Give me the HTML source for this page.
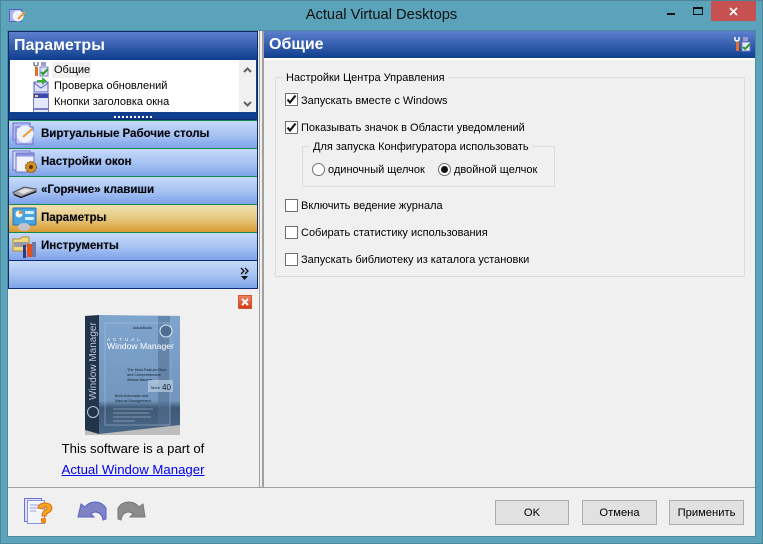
<!DOCTYPE html>
<html><head><meta charset="utf-8">
<style>
*{box-sizing:border-box;margin:0;padding:0}
html,body{width:763px;height:544px;overflow:hidden;background:#5ba3ba}
body{position:relative;font-family:"Liberation Sans","DejaVu Sans",sans-serif;font-size:11px;color:#000}
.a{position:absolute}
.t{position:absolute;white-space:nowrap;line-height:14px;font-size:11px}
.nav{position:absolute;left:9px;width:248px;height:28px;background:linear-gradient(#c6dafa,#a8c4f3 50%,#7ea2ea);border-top:1px solid #0f8a4a}
.nav b{position:absolute;left:32px;top:6px;font-size:11.5px;line-height:14px;white-space:nowrap;color:#000;text-shadow:1px 0 0 #1b2f6b33}
.nav svg{position:absolute;left:3px;top:1px}
.cb{position:absolute;left:285px;width:13px;height:13px;border:1px solid #707070;background:#fff}
.cb svg{position:absolute;left:0;top:0}
.btn{position:absolute;top:500px;height:25px;border:1px solid #adadad;background:#e1e1e1;text-align:center;font-size:11.2px;line-height:24px}
.rad{position:absolute;top:163px;width:13px;height:13px;border:1px solid #707070;border-radius:50%;background:#fff}
</style></head><body>
<div class="a" style="left:0;top:0;width:763px;height:544px;border:1px solid #4c8799"></div>
<svg class="a" style="left:9px;top:9px" width="18" height="14" viewBox="0 0 18 14"><rect x="0.5" y="0.5" width="12" height="12" fill="#aab0ea" stroke="#5a5fc0"/><circle cx="9" cy="7" r="5.5" fill="#f1f3fb"/><path d="M9 10L16 3" stroke="#ee9a30" stroke-width="2"/></svg>
<div class="a" style="left:0;top:6px;width:763px;text-align:center;font-size:14.700px;line-height:19px;color:#111">Actual Virtual Desktops</div>
<div class="a" style="left:667px;top:13px;width:8px;height:2px;background:#111"></div>
<div class="a" style="left:693px;top:7px;width:10px;height:8px;border:1px solid #111;border-top-width:2px"></div>
<div class="a" style="left:711px;top:1px;width:45px;height:20px;background:#c75050"></div>
<svg class="a" style="left:729px;top:7px" width="9" height="9" viewBox="0 0 9 9"><path d="M1 1L8 8M8 1L1 8" stroke="#fff" stroke-width="1.7"/></svg>

<div class="a" style="left:7px;top:30px;width:749px;height:507px;background:#f0f0f0;border:1px solid #4c8a9e"></div>

<!-- left header -->
<div class="a" style="left:8px;top:31px;width:250px;height:89px;background:linear-gradient(#5d80cf,#0f3f8e 27px,#0f3f8e);border:1px solid #0e2a66"></div>
<div class="a" style="left:14px;top:37px;font-size:16px;font-weight:bold;line-height:18px;color:#fff">Параметры</div>
<div class="a" style="left:10px;top:60px;width:246px;height:52px;background:#fff;overflow:hidden">
  <svg class="a" style="left:23px;top:1px" width="17" height="16" viewBox="0 0 17 16"><path d="M1 1v3q2 2 4 0V1" fill="none" stroke="#7b7f9d" stroke-width="1.5"/><rect x="2" y="6" width="3" height="9" fill="#e0702a"/><rect x="7" y="6" width="8" height="9" fill="#dfe2f7" stroke="#7a7ec9"/><path d="M8 11l2 2 5-5" stroke="#2a9a2a" stroke-width="2" fill="none"/><rect x="8" y="1" width="5" height="4" fill="#9a9ed0"/></svg>
  <svg class="a" style="left:23px;top:17px" width="17" height="16" viewBox="0 0 17 16"><rect x="1" y="5" width="14" height="10" fill="#dfe2fa" stroke="#5a5fc0"/><path d="M1 6l7 5 7-5" fill="none" stroke="#5a5fc0"/><path d="M4 3h5V0l5 4-5 4V5H4z" fill="#3eaa3a"/></svg>
  <svg class="a" style="left:23px;top:33px" width="17" height="16" viewBox="0 0 17 16"><rect x="0.5" y="0.5" width="15" height="15" fill="#e4e8fb" stroke="#7a7ec9"/><rect x="1" y="1" width="14" height="4" fill="#3c49a8"/><rect x="2" y="2" width="3" height="2" fill="#f0d060"/></svg>
  <svg class="a" style="left:23px;top:49px" width="17" height="4"><rect x="0.5" y="0.5" width="15" height="4" fill="#e4e8fb" stroke="#7a7ec9"/></svg>
  <div class="a" style="left:42px;top:2px;width:39px;height:16px;background:#f0f0f0"></div>
  <div class="t" style="left:44px;top:3px">Общие</div>
  <div class="t" style="left:44px;top:19px">Проверка обновлений</div>
  <div class="t" style="left:44px;top:35px">Кнопки заголовка окна</div>
  <div class="a" style="left:229px;top:0;width:17px;height:52px;background:#f0f0f0"></div>
  <svg class="a" style="left:233px;top:7px" width="9" height="6" viewBox="0 0 9 6"><path d="M1 5l3.5-3.5L8 5" fill="none" stroke="#606060" stroke-width="2"/></svg>
  <svg class="a" style="left:233px;top:41px" width="9" height="6" viewBox="0 0 9 6"><path d="M1 1l3.5 3.5L8 1" fill="none" stroke="#606060" stroke-width="2"/></svg>
</div>
<div class="a" style="left:114px;top:116px;width:39px;height:2px;background:repeating-linear-gradient(90deg,#fff 0 2px,transparent 2px 4px)"></div>

<!-- nav -->
<div class="nav" style="top:120px"><svg width="26" height="26" viewBox="0 0 26 26"><rect x="1" y="1" width="17" height="17" fill="#b4baf0" stroke="#6a70c8"/><rect x="4" y="5" width="17" height="17" fill="#c4caf4" stroke="#6a70c8"/><circle cx="13" cy="12" r="8.500" fill="#eef2fc"/><path d="M11 15L20 7" stroke="#ee9a30" stroke-width="2"/></svg><b>Виртуальные Рабочие столы</b></div>
<div class="nav" style="top:148px"><svg width="26" height="26" viewBox="0 0 26 26"><rect x="1" y="1" width="17" height="19" fill="#dfe3fb" stroke="#6a70c8"/><rect x="4" y="3" width="18" height="19" fill="#f0f3fd" stroke="#6a70c8"/><rect x="4.500" y="3.500" width="17" height="3" fill="#8a94dc"/><circle cx="19" cy="17" r="5.500" fill="#d09020" stroke="#8a5a10" stroke-dasharray="2 1"/><circle cx="19" cy="17" r="2" fill="#5b3a08"/></svg><b>Настройки окон</b></div>
<div class="nav" style="top:176px"><svg width="26" height="26" viewBox="0 0 26 26"><path d="M1 14.500L12 9l12 2v3L9 19l-6-2z" fill="#a8a8b0" stroke="#555"/><path d="M6 13.500L13 10.500l8 1.500-10 4z" fill="#e4e4e8"/><path d="M2 16.500l7 3 15-6" fill="none" stroke="#222" stroke-width="1.500"/></svg><b>«Горячие» клавиши</b></div>
<div class="nav" style="top:204px;background:linear-gradient(#efe0b0,#e6c880 50%,#d89a32)"><svg width="26" height="26" viewBox="0 0 26 26"><rect x="1" y="2" width="23" height="17" rx="1" fill="#48a4e0" stroke="#2a70a8"/><circle cx="7" cy="8" r="3.500" fill="#f4f4f4"/><path d="M7 8V4.500A3.500 3.500 0 0 1 10.500 8z" fill="#ee9030"/><rect x="13" y="5" width="9" height="3" rx="1" fill="#d8eefa"/><rect x="13" y="11" width="9" height="3" rx="1" fill="#d8eefa"/><ellipse cx="12" cy="21" rx="6" ry="4" fill="#c4c4c8"/></svg><b>Параметры</b></div>
<div class="nav" style="top:232px"><svg width="26" height="26" viewBox="0 0 26 26"><path d="M1 5h7l2-2h7v14H1z" fill="#f0d880" stroke="#b09030"/><rect x="2" y="8" width="15" height="5" fill="#9a9aa2"/><rect x="11" y="11" width="3" height="13" fill="#2a3a90"/><rect x="15" y="10" width="5" height="13" fill="#e05020"/><rect x="20" y="8" width="4" height="15" fill="#7078a8"/></svg><b>Инструменты</b></div>
<div class="a" style="left:9px;top:260px;width:248px;height:29px;background:linear-gradient(#c6dafa,#a8c4f3 50%,#7ea2ea);border-top:1px solid #0e2a7a;border-bottom:1px solid #0e2a7a"></div>
<svg class="a" style="left:240px;top:267px" width="10" height="14" viewBox="0 0 10 14"><path d="M1 1l3 3-3 3M5 1l3 3-3 3" fill="none" stroke="#111" stroke-width="1.300"/><path d="M1 9h7l-3.500 4z" fill="#111"/></svg>
<div class="a" style="left:8px;top:31px;width:1px;height:258px;background:#0e2a66"></div>
<div class="a" style="left:257px;top:31px;width:1px;height:258px;background:#0e2a66"></div>

<!-- promo -->
<div class="a" style="left:238px;top:295px;width:14px;height:14px;background:linear-gradient(#ee8060,#d83c18);border:1px solid #c85a3a"></div>
<svg class="a" style="left:241px;top:298px" width="8" height="8" viewBox="0 0 8 8"><path d="M1 1l6 6M7 1L1 7" stroke="#fff" stroke-width="2"/></svg>
<svg class="a" style="left:85px;top:315px;filter:blur(.35px)" width="95" height="120" viewBox="0 0 95 120">
<defs><linearGradient id="g" x1="0" y1="0" x2="0" y2="1"><stop offset="0" stop-color="#7fa5cf"/><stop offset="0.72" stop-color="#7296bd"/><stop offset="0.78" stop-color="#3f5876"/><stop offset="1" stop-color="#4a6888"/></linearGradient></defs>
<rect width="95" height="120" fill="#e8e8e8"/>
<rect x="0" y="110" width="95" height="10" fill="#bdbdbd"/>
<path d="M0 1L14 0V119L0 115z" fill="#22344a"/>
<path d="M14 0L95 1V110L14 119z" fill="url(#g)"/>
<rect x="73" y="1" width="12" height="110" fill="#52708f" opacity=".55"/>
<rect x="20" y="8" width="65" height="102" fill="none" stroke="#a9c3de" opacity=".5"/>
<circle cx="81" cy="16" r="6" fill="#4e6e92" stroke="#e3edf6"/>
<text x="48" y="14" font-size="4" fill="#223" font-family="Liberation Sans">actualtools</text>
<text x="22" y="26" font-size="4.500" letter-spacing="3" fill="#fff" font-family="Liberation Sans">ACTUAL</text>
<text x="22" y="34" font-size="8.600" fill="#fff" font-family="Liberation Sans">Window Manager</text>
<text x="42" y="56" font-size="3.800" fill="#10202f" font-family="Liberation Sans">The Most Feature-Rich</text>
<text x="42" y="61" font-size="3.800" fill="#10202f" font-family="Liberation Sans">and Comprehensive</text>
<text x="42" y="66" font-size="3.300" fill="#10202f" font-family="Liberation Sans">Window Manager</text>
<rect x="63" y="65" width="25" height="12" fill="#b9cde2" opacity=".7"/>
<text x="66" y="74" font-size="4" fill="#10202f" font-family="Liberation Sans">More</text>
<text x="77" y="75" font-size="8" fill="#10202f" font-family="Liberation Sans">40</text>
<text x="30" y="82" font-size="3.800" fill="#10202f" font-family="Liberation Sans">Both Automatic and</text>
<text x="30" y="87" font-size="3.800" fill="#10202f" font-family="Liberation Sans">Manual Management</text>
<path d="M28 94h40M28 98h36M28 102h38M28 106h22" stroke="#b0c0d0" stroke-width="1" opacity=".6"/>
<text transform="translate(11,85) rotate(-90)" font-size="10" fill="#b9c8d8" font-family="Liberation Sans">Window Manager</text>
<circle cx="8" cy="97" r="5.500" fill="none" stroke="#b9c8d8"/>
</svg>
<div class="a" style="left:9px;top:441px;width:248px;text-align:center;font-size:13.100px;line-height:15px">This software is a part of</div>
<div class="a" style="left:9px;top:462px;width:248px;text-align:center;font-size:13.200px;line-height:15px;color:#0000ee;text-decoration:underline">Actual Window Manager</div>

<!-- splitter -->
<div class="a" style="left:259px;top:31px;width:1px;height:456px;background:#a0a0a0"></div>
<div class="a" style="left:262px;top:31px;width:2px;height:456px;background:#a0a0a0"></div>

<!-- right header -->
<div class="a" style="left:264px;top:31px;width:491px;height:27px;background:linear-gradient(#5d80cf,#0f3f8e)"></div>
<div class="a" style="left:264px;top:58px;width:491px;height:2px;background:#fff"></div>
<div class="a" style="left:269px;top:36px;font-size:16px;font-weight:bold;line-height:18px;color:#fff">Общие</div>
<svg class="a" style="left:734px;top:36px" width="17" height="16" viewBox="0 0 17 16"><path d="M1 1v3q2 2 4 0V1" fill="none" stroke="#fff" stroke-width="1.500"/><rect x="2" y="6" width="3" height="9" fill="#e0702a"/><rect x="8" y="6" width="8" height="9" fill="#e8eafa" stroke="#7a7ec9"/><path d="M9 11l2 2 5-5" stroke="#2a9a2a" stroke-width="2" fill="none"/><rect x="9" y="1" width="5" height="4" fill="#9a9ed0"/></svg>

<!-- group -->
<div class="a" style="left:275px;top:77px;width:470px;height:200px;border:1px solid #dcdcdc"></div>
<div class="t" style="left:283px;top:71px;background:#f0f0f0;padding:0 3px">Настройки Центра Управления</div>
<div class="cb" style="top:93px"><svg width="11" height="11" viewBox="0 0 11 11"><path d="M1.500 5.500l2.500 3L9.500 1.500" fill="none" stroke="#111" stroke-width="2.100"/></svg></div>
<div class="t" style="left:301px;top:94px">Запускать вместе с Windows</div>
<div class="cb" style="top:121px"><svg width="11" height="11" viewBox="0 0 11 11"><path d="M1.500 5.500l2.500 3L9.500 1.500" fill="none" stroke="#111" stroke-width="2.100"/></svg></div>
<div class="t" style="left:301px;top:121px">Показывать значок в Области уведомлений</div>
<div class="a" style="left:302px;top:146px;width:253px;height:41px;border:1px solid #dcdcdc"></div>
<div class="t" style="left:310px;top:140px;background:#f0f0f0;padding:0 3px">Для запуска Конфигуратора использовать</div>
<div class="rad" style="left:312px"></div>
<div class="t" style="left:328px;top:163px">одиночный щелчок</div>
<div class="rad" style="left:438px"><div class="a" style="left:2px;top:2px;width:7px;height:7px;border-radius:50%;background:#111"></div></div>
<div class="t" style="left:454px;top:163px">двойной щелчок</div>
<div class="cb" style="top:199px"></div>
<div class="t" style="left:301px;top:199px">Включить ведение журнала</div>
<div class="cb" style="top:226px"></div>
<div class="t" style="left:301px;top:226px">Собирать статистику использования</div>
<div class="cb" style="top:253px"></div>
<div class="t" style="left:301px;top:253px">Запускать библиотеку из каталога установки</div>

<!-- bottom -->
<div class="a" style="left:8px;top:487px;width:747px;height:1px;background:#a0a0a0"></div>
<svg class="a" style="left:23px;top:498px" width="32" height="28" viewBox="0 0 32 28"><rect x="1.500" y="0.500" width="17" height="23" fill="#dfe3fb" stroke="#6a70d0"/><rect x="4.500" y="2.500" width="17" height="23" fill="#f3f5fe" stroke="#8a90dc"/><path d="M7 7h9M7 10h9M7 13h6" stroke="#9aa0e0"/><path d="M15 10q1-5 7-5t7 5q0 3-4 5-2 1-2 3h-4q0-4 3-6 2-1 2-2-1-2-3-1-1 0-1 2z" fill="#f4a820" stroke="#d87010"/><rect x="18" y="20" width="5" height="5" fill="#ee8a10"/></svg>
<svg class="a" style="left:77px;top:500px" width="30" height="22" viewBox="0 0 30 22"><path d="M1 17L4 4l4 3q4-5 10-5 7 0 11 6v11q-1 0-3 1-1-7-7-8-3 0-5 2l3 3z" fill="#7d83c4" stroke="#5a60c8"/></svg>
<svg class="a" style="left:117px;top:500px" width="30" height="22" viewBox="0 0 30 22"><path d="M28 17L26 4l-4 3Q18 2 12 2 5 2 1 8v11q1 0 3 1 1-7 7-8 3 0 5 2l-3 3z" fill="#8c8c8c" stroke="#777"/></svg>
<div class="btn" style="left:495px;width:74px">OK</div>
<div class="btn" style="left:582px;width:75px">Отмена</div>
<div class="btn" style="left:669px;width:75px">Применить</div>
</body></html>
